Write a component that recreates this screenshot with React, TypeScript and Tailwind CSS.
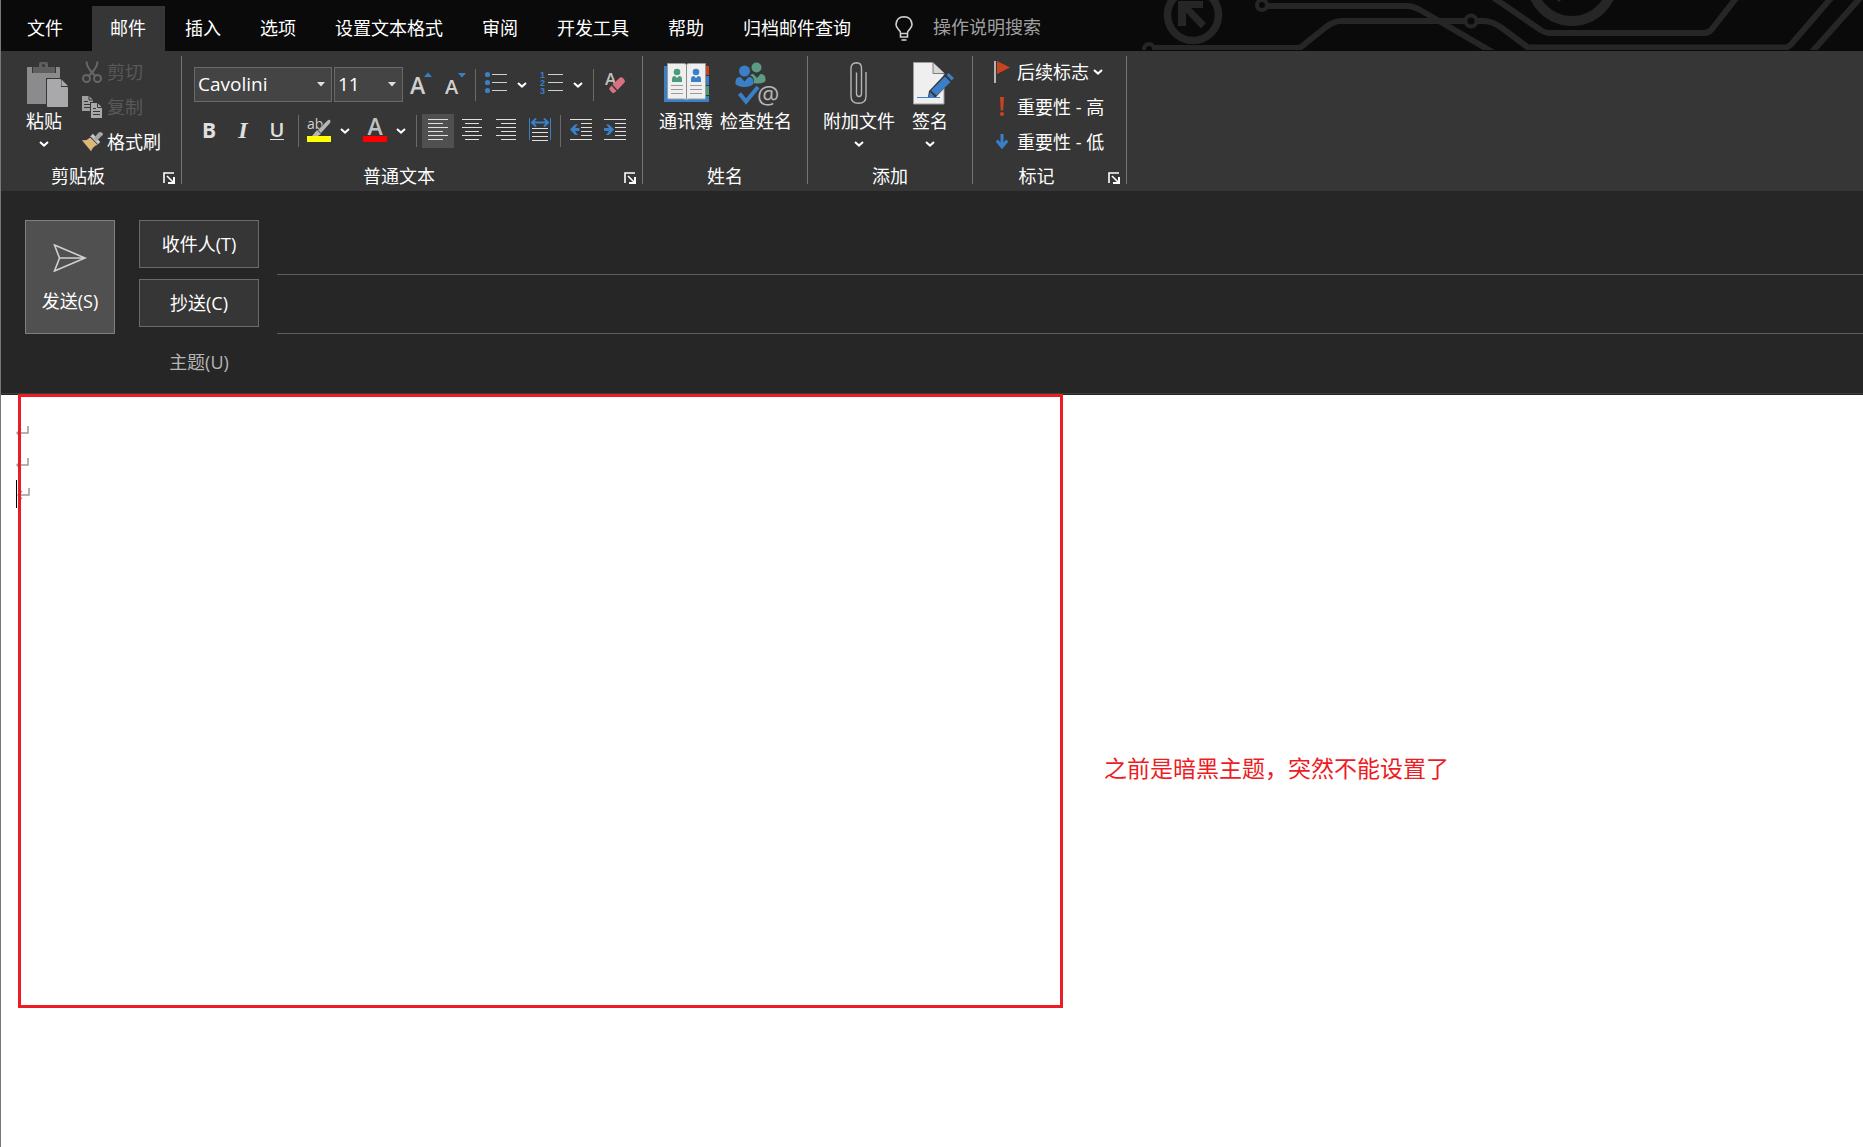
import React from "react";

type Kids = { children?: React.ReactNode };

const BLUE = "#3a80c9";
const RED = "#ca4420";

/* ---------- small shared pieces ---------- */

function Chevron() {
  return (
    <svg width="10" height="6" viewBox="0 0 10 6" fill="none" stroke="#fff" strokeWidth="2" aria-hidden="true">
      <path d="M1 1l4 3.6L9 1" />
    </svg>
  );
}

function Group({ label, launcher, className, children }: Kids & { label: string; launcher?: boolean; className?: string }) {
  return (
    <section aria-label={label} className="flex h-32 shrink-0 flex-col justify-between border-r border-[#757575]">
      <div className={className}>{children}</div>
      <div className="flex items-end">
        <div className="flex-1 pb-px text-center leading-[14px]">{label}</div>
        {launcher && (
          <button aria-label={label + "设置"} className="w-[26px] pl-2">
            <svg width="12" height="12" viewBox="0 0 12 12" fill="none" stroke="#fff" strokeWidth="2">
              <path d="M1 11V1h10" strokeWidth="1.6" />
              <path d="M4 4l6 6" strokeWidth="1.6" />
              <path d="M11 5v6H5" strokeWidth="2" />
            </svg>
          </button>
        )}
      </div>
    </section>
  );
}

function BigButton({ icon, label, menu, start }: { icon: React.ReactNode; label: string; menu?: boolean; start?: boolean }) {
  return (
    <button className={start ? "flex flex-col items-start" : "flex flex-col items-center"}>
      <span className="flex h-[46px] items-start">{icon}</span>
      <span className="flex flex-col items-center">
        <span className="leading-[26px]">{label}</span>
        {menu && (
          <span className="flex h-5 items-center">
            <Chevron />
          </span>
        )}
      </span>
    </button>
  );
}

function SmallButton({ icon, label, disabled, menu }: { icon: React.ReactNode; label: string; disabled?: boolean; menu?: boolean }) {
  return (
    <button disabled={disabled} className="flex h-[31px] items-center gap-1 disabled:text-[#595959]">
      <span className="flex w-[22px] justify-center">{icon}</span>
      <span>{label}</span>
      {menu && <Chevron />}
    </button>
  );
}

function Tool({ label, active, narrow, children }: Kids & { label: string; active?: boolean; narrow?: boolean }) {
  const width = narrow ? "w-8" : "w-[34px]";
  return (
    <button
      aria-label={label}
      className={`flex h-[34px] items-center justify-center pb-[3px] text-[#e0e0e0] ${width} ${active ? "bg-[#505050]" : ""}`}
    >
      {children}
    </button>
  );
}

function Drop({ label }: { label: string }) {
  return (
    <button aria-label={label} className="flex h-[34px] w-[18px] items-center justify-center">
      <Chevron />
    </button>
  );
}

function Sep({ wide }: { wide?: boolean }) {
  return (
    <span className={wide ? "flex w-3 justify-center" : "flex w-2 justify-center"}>
      <span className="h-8 w-px bg-[#6a6a6a]" />
    </span>
  );
}

function Picker({ label, value, className }: { label: string; value: string; className: string }) {
  return (
    <span className={`relative flex h-[35px] ${className}`}>
      <select
        aria-label={label}
        defaultValue={value}
        className="w-full appearance-none border border-[#6a6a6a] bg-[#444] pb-0.5 pl-[3px] text-[19px] text-white"
      >
        <option>{value}</option>
      </select>
      <svg className="pointer-events-none absolute top-[15px] right-[7px]" width="8" height="5" viewBox="0 0 8 5" aria-hidden="true">
        <path d="M0 0h8L4 4.6z" fill="#e0e0e0" />
      </svg>
    </span>
  );
}

/* ---------- icons ---------- */

function PasteIcon() {
  return (
    <svg width="42" height="46" viewBox="0 0 42 46">
      <path d="M1 5h33v37H1z" fill="#8b8b8d" />
      <path d="M6 5h29v6H6z" fill="#363636" />
      <path d="M30 5h3q1 0 1 1v6h-4z" fill="#8b8b8d" />
      <path d="M7 5h6V2q0-2 2-2h5q2 0 2 2v3h7v6H7z" fill="#5f5f5f" />
      <circle cx="17.500" cy="3.500" r="1.500" fill="#363636" />
      <path d="M20 16h15l8 8v22H20z" fill="#363636" />
      <path d="M21.500 17.500h13v8h7v19h-20z" fill="#a9a9ab" stroke="#a9a9ab" strokeWidth="1" />
      <path d="M35.500 17.500v6.500H42z" fill="#a9a9ab" />
    </svg>
  );
}

function CutIcon() {
  return (
    <svg width="20" height="22" viewBox="0 0 20 22" fill="none" stroke="#666" strokeWidth="2">
      <path d="M4.500 0.500q0 4 3 8l6 7M15.500 0.500q0 4-3 8l-6 7" />
      <circle cx="4.500" cy="17.500" r="3.500" />
      <circle cx="15.500" cy="17.500" r="3.500" />
    </svg>
  );
}

function CopyIcon() {
  return (
    <svg width="20" height="22" viewBox="0 0 20 22">
      <path d="M0 0h7l4 4v11H0z" fill="#a0a0a0" />
      <path d="M7 0v4h4" fill="none" stroke="#363636" />
      <path d="M2 5.500h4M2 8.500h6M2 11.500h6" stroke="#363636" />
      <path d="M8 6h8l4 4v12H8z" fill="#363636" />
      <path d="M9 7h6.500l4.500 4.500V22H9z" fill="#a9a9ab" />
      <path d="M15.500 7v4.500H20" fill="none" stroke="#363636" />
      <path d="M11 12.500h3M11 15.500h7M11 18.500h7" stroke="#363636" />
    </svg>
  );
}

function BrushIcon() {
  return (
    <svg width="24" height="22" viewBox="0 0 24 22">
      <path d="M1 9q5 1 9-3l8 8q-5 2-7 7z" fill="#deb77b" />
      <path d="M10 5l3-3 8 9-3 3z" fill="#c9c9c9" />
      <path d="M14 7l5-6q2-2 4 0t0 3l-6 6z" fill="#a6a6a6" />
      <path d="M10.500 5.500l8 8.500" stroke="#363636" />
    </svg>
  );
}

function GrowFont({ down }: { down?: boolean }) {
  return (
    <svg width="22" height="24" viewBox="0 0 22 24" className="overflow-visible">
      <text x={down ? 2 : 1} y="23" fontSize={down ? 20 : 23} fontWeight="600" fill="#d0d0d0" fontFamily="Open Sans, sans-serif">
        A
      </text>
      <path d={down ? "M15 2h8l-4 4.500z" : "M15 6h8l-4-4.500z"} fill={BLUE} />
    </svg>
  );
}

function ListIcon({ numbered }: { numbered?: boolean }) {
  return (
    <svg width="24" height="24" viewBox="0 0 24 24" className="overflow-visible">
      {[4, 12, 20].map((y, i) =>
        numbered ? (
          <text key={y} x="0" y={y + 3} fontSize="9" fontWeight="700" fill={BLUE} fontFamily="Liberation Sans, sans-serif">
            {i + 1}
          </text>
        ) : (
          <circle key={y} cx="3.500" cy={y - 0.5} r="2.600" fill={BLUE} />
        ),
      )}
      <path d="M8 3.500h15M8 11.500h15M8 19.500h15" stroke="#d0d0d0" />
    </svg>
  );
}

function EraserIcon() {
  return (
    <svg width="22" height="24" viewBox="0 0 22 24" className="overflow-visible">
      <text x="0" y="14" fontSize="17" fontWeight="600" fill="#c0c0c0" fontFamily="Open Sans, sans-serif">
        A
      </text>
      <path d="M4 17L16 6l5 6-12 12z" fill="#363636" />
      <path d="M7.500 13.500L15 6.600q1.500-1 3 .5l1.500 2q1 1.500 0 2.500L12.500 19z" fill="#da7183" />
      <path d="M6.500 14.500L4.500 17q-.6 1 .3 2l2.400 2.800q1 .8 2 0L11.500 20z" fill="#da7183" />
    </svg>
  );
}

function HighlightIcon() {
  return (
    <svg width="24" height="24" viewBox="0 0 24 24" className="overflow-visible">
      <text x="0" y="11" fontSize="14" fill="#d0d0d0" fontFamily="Open Sans, sans-serif">
        ab
      </text>
      <path d="M8 15L20 2l5 4-11 12z" fill="#363636" />
      <path d="M11 12l9-9q2-2 3-1t0 3l-9 10z" fill="#b5b5b5" />
      <path d="M10 12l4 4-3 2H5z" fill="#b5b5b5" />
      <path d="M0 18h24v6H0z" fill="#ff0" />
    </svg>
  );
}

function FontColorIcon() {
  return (
    <svg width="24" height="24" viewBox="0 0 24 24" className="overflow-visible">
      <text x="12" y="17" textAnchor="middle" fontSize="23" fontWeight="600" fill="#c0c0c0" fontFamily="Open Sans, sans-serif">
        A
      </text>
      <path d="M0 18h24v6H0z" fill="#f00" />
    </svg>
  );
}

function AlignIcon({ kind }: { kind: "left" | "center" | "right" }) {
  const inset = { left: 0, center: 3, right: 5 }[kind];
  const short = kind === "center" ? 14 : 15;
  return (
    <svg width="20" height="22" viewBox="0 0 20 22" stroke="#e0e0e0">
      {[0, 1, 2, 3, 4, 5].map((i) => {
        const y = i * 4 + 0.5;
        const odd = i % 2 === 1;
        return <path key={i} d={odd ? `M${inset} ${y}h${short}` : `M0 ${y}h20`} />;
      })}
    </svg>
  );
}

function DistributeIcon() {
  return (
    <svg width="22" height="23" viewBox="0 0 22 23" fill="none">
      <path d="M.5 0v22M21.500 0v22" stroke={BLUE} />
      <path d="M3 4.500h16M7 .5l-4 4 4 4M15 .5l4 4-4 4" stroke={BLUE} strokeWidth="2" />
      <path d="M3 10.500h16M3 14.500h16M3 18.500h16M3 22.500h16" stroke="#e0e0e0" />
    </svg>
  );
}

function IndentIcon({ out }: { out?: boolean }) {
  return (
    <svg width="22" height="21" viewBox="0 0 22 21" fill="none">
      <path d="M0 .5h22M11 4.500h11M11 8.500h11M11 12.500h11M11 16.500h11M0 20.500h22" stroke="#e0e0e0" />
      <path
        d={out ? "M0 10.500l5-5h3L5 9h4.500v3H5l3 4H5z" : "M10 10.500l-5-5H2L5 9H0v3h5l-3 4h3z"}
        fill={BLUE}
      />
    </svg>
  );
}

function BookIcon() {
  return (
    <svg width="46" height="42" viewBox="0 0 46 42">
      <path d="M1 4h40v36H1z" fill={BLUE} />
      <path d="M42 4h4v9h-4z" fill={RED} />
      <path d="M42 14h4v9h-4z" fill={BLUE} />
      <path d="M42 24h4v9h-4z" fill="#4c9a7c" />
      <path d="M41 34h5v6h-5z" fill={BLUE} />
      <path d="M4.500 1.500h16q3 0 3 1.500 0-1.500 3-1.500h16V37h-16q-3 0-3 1 0-1-3-1h-16z" fill="#efefef" stroke="#9b9b9b" />
      <path d="M23.500 3v34" stroke="#8a8a8a" />
      <circle cx="14" cy="10" r="3.300" fill="#4c9a7c" />
      <path d="M9 20v-3q0-3 3-3l2 2 2-2q3 0 3 3v3z" fill="#4c9a7c" />
      <circle cx="33" cy="10" r="3.300" fill={BLUE} />
      <path d="M28 20v-3q0-3 3-3l2 2 2-2q3 0 3 3v3z" fill={BLUE} />
      <path d="M8 23.500h12M8 27.500h12M8 31.500h12M27 23.500h12M27 27.500h12M27 31.500h12" stroke="#9b9b9b" />
    </svg>
  );
}

function CheckNamesIcon() {
  return (
    <svg width="50" height="46" viewBox="-4 0 50 46" className="overflow-visible">
      <circle cx="21.500" cy="5.500" r="5" fill="#5d9c84" />
      <path d="M14 21v-4q0-5 4.500-5l3.500 4 3.500-4q5 0 5 5v2q-2 2.500-8 2.500z" fill="#5d9c84" />
      <path d="M0 24v-6q2-5 5-5h9q5 1 5 6v6z" fill="#363636" />
      <circle cx="9.500" cy="9" r="5.500" fill={BLUE} />
      <path d="M.5 22v-2q0-5 5-5l4 4.500L13.500 15q5 0 5 5v2q-3 3-9 3t-9-3z" fill={BLUE} />
      <path d="M4.500 31.500l6.500 8L23 25" fill="none" stroke={BLUE} strokeWidth="4" />
      <text x="22" y="42" fontSize="25" fill="#b5b5b5" fontFamily="Open Sans, sans-serif">
        @
      </text>
    </svg>
  );
}

function ClipIcon() {
  return (
    <svg width="18" height="42" viewBox="0 0 18 42" fill="none" stroke="#b5b5b5" strokeWidth="1.400">
      <path d="M6.500 10.500v21q0 3 2.500 3t2.500-3V6q0-5-5-5.200Q1 1 1 6.500V34q0 7.300 7.500 7.300T16 34V10" />
    </svg>
  );
}

function SignIcon() {
  return (
    <svg width="42" height="44" viewBox="0 0 42 44">
      <path d="M1.500 .5h19L32 11v31H1.500z" fill="#efefef" stroke="#9b9b9b" />
      <path d="M21 .5V11.500h11" fill="#d8d8d8" stroke="#7b7b7b" />
      <path d="M22 0h10v10z" fill="#363636" />
      <path d="M17 29L35 10l7 6-18 19h-8z" fill="#363636" />
      <path d="M19 28.500l14-14 5.500 5.500-14 13.500z" fill={BLUE} />
      <path d="M34.500 13l2-2 5.500 5-2.500 2.500zM18 30l4.500 4.500-6 1.500z" fill={BLUE} />
      <path d="M5 35.500h23" stroke={BLUE} />
    </svg>
  );
}

function FlagIcon() {
  return (
    <svg width="16" height="22" viewBox="0 0 16 22">
      <path d="M0 0h2v22H0z" fill="#b5b5b5" />
      <path d="M3 0l13 6.500L3 13z" fill={RED} />
    </svg>
  );
}

function HighIcon() {
  return (
    <svg width="6" height="20" viewBox="0 0 6 20" fill={RED}>
      <path d="M1 0h4l-.8 13.500H1.800z" />
      <circle cx="3" cy="17" r="2" />
    </svg>
  );
}

function LowIcon() {
  return (
    <svg width="12" height="16" viewBox="0 0 12 16" fill="none" stroke={BLUE} strokeWidth="3">
      <path d="M6 0v13M.8 6.500L6 12.800l5.200-6.300" />
    </svg>
  );
}

function BulbIcon() {
  return (
    <svg width="18" height="25" viewBox="0 0 18 25" fill="none" stroke="#d0d0d0" strokeWidth="1.600">
      <path d="M5.500 17.500Q5.500 15 3 12.800 1 10.500 1 8.500 1.500 1 9 .8 16.500 1 17 8.500q0 2-2 4.300-2.500 2.200-2.500 4.700zM5.500 17.500v3.500h7v-3.500" />
      <path d="M6.500 24h5" />
    </svg>
  );
}

function SendIcon() {
  return (
    <svg width="34" height="28" viewBox="0 0 34 28" fill="none" stroke="#d0d0d0" strokeWidth="1.600">
      <path d="M1.500 1L32 14 1.500 27l5-13zM6.500 14H32" />
    </svg>
  );
}

function CircuitArt() {
  return (
    <svg width="733" height="50" viewBox="0 0 733 50" fill="none" stroke="#262626" strokeWidth="6" className="ml-auto shrink-0" aria-hidden="true">
      <circle cx="63" cy="15" r="25.500" strokeWidth="7.500" />
      <path d="M48 1h25v7H61l15 15-5 5.500-15-16V26h-8z" fill="#262626" stroke="none" />
      <circle cx="132" cy="5" r="5" strokeWidth="4" />
      <path d="M138 6h139q6 0 14 4.500L364 53" />
      <circle cx="19" cy="49" r="5" strokeWidth="4" />
      <path d="M25 48h142q4 0 9-5l20-16q8-6 15-6h124M347 21h7q8 0 18 7l26 19.500h257q3 0 6-3L702-3" />
      <circle cx="341" cy="21" r="5.500" strokeWidth="4" />
      <path d="M364-2l43 29.500q7 5.500 12 5.500h155q5 0 8-4l25-32" />
      <circle cx="442" cy="-20" r="41" strokeWidth="10" />
      <path d="M427 0h4l-2 2z" fill="#262626" stroke="none" />
      <path d="M731-3l-50 56" />
    </svg>
  );
}

function ParagraphMark() {
  return (
    <svg width="13" height="12" viewBox="0 0 13 12" fill="none" stroke="#9a9a9a" strokeWidth="1.500">
      <path d="M12 0v7H1M5 3L1 7l4 4" />
    </svg>
  );
}

/* ---------- page ---------- */

const tabs = ["邮件", "插入", "选项", "设置文本格式", "审阅", "开发工具", "帮助", "归档邮件查询"];

function TabBar() {
  return (
    <header className="flex h-[51px] items-start overflow-hidden bg-[#0a0a0a]">
      <nav className="flex shrink-0 gap-0.5 pt-1.5 pl-2">
        <button className="mr-2 h-[45px] pr-[19px] pb-0.5 pl-[18px]">文件</button>
        {tabs.map((t, i) => (
          <button key={t} className={`h-[45px] pr-[19px] pb-0.5 pl-[18px] ${i === 0 ? "bg-[#363636]" : ""}`}>
            {t}
          </button>
        ))}
      </nav>
      <label className="flex shrink-0 items-center gap-5 pt-[15px] pl-[25px]">
        <BulbIcon />
        <input aria-label="操作说明搜索" placeholder="操作说明搜索" className="w-[130px] bg-transparent pb-0.5 outline-none placeholder:text-[#a0a0a0]" />
      </label>
      <CircuitArt />
    </header>
  );
}

function Ribbon() {
  return (
    <div className="flex bg-[#363636] pt-[5px] pb-[7px]">
      <Group label="剪贴板" launcher className="flex gap-[13px] pr-5 pl-[25px]">
        <div className="pt-1.5">
          <BigButton icon={<PasteIcon />} label="粘贴" menu start />
        </div>
        <div className="flex flex-col gap-1">
          <SmallButton icon={<CutIcon />} label="剪切" disabled />
          <SmallButton icon={<CopyIcon />} label="复制" disabled />
          <SmallButton icon={<BrushIcon />} label="格式刷" />
        </div>
      </Group>

      <Group label="普通文本" launcher className="flex flex-col gap-3 pt-[11px] pr-[9px] pl-2.5">
        <div className="flex items-center pl-0.5">
          <Picker label="字体" value="Cavolini" className="mr-0.5 w-[138px]" />
          <Picker label="字号" value="11" className="w-[69px]" />
          <Tool label="增大字号"><GrowFont /></Tool>
          <Tool label="减小字号"><GrowFont down /></Tool>
          <Sep />
          <Tool label="项目符号"><ListIcon /></Tool>
          <Drop label="项目符号选项" />
          <span className="w-1" />
          <Tool label="编号"><ListIcon numbered /></Tool>
          <Drop label="编号选项" />
          <Sep wide />
          <Tool label="清除格式"><EraserIcon /></Tool>
        </div>
        <div className="flex items-center">
          <Tool label="加粗"><span className="text-[21px] font-bold">B</span></Tool>
          <Tool label="倾斜"><span className="font-['Liberation_Serif',serif] text-[24px] font-bold italic">I</span></Tool>
          <Tool label="下划线"><span className="border-b border-[#e0e0e0] text-[20px] leading-[19px] font-semibold">U</span></Tool>
          <Sep />
          <Tool label="突出显示"><HighlightIcon /></Tool>
          <Drop label="突出显示颜色" />
          <span className="w-1" />
          <Tool label="字体颜色"><FontColorIcon /></Tool>
          <Drop label="字体颜色选项" />
          <Sep wide />
          <div className="flex gap-0.5">
            <Tool label="左对齐" narrow active><AlignIcon kind="left" /></Tool>
            <Tool label="居中" narrow><AlignIcon kind="center" /></Tool>
            <Tool label="右对齐" narrow><AlignIcon kind="right" /></Tool>
            <Tool label="分散对齐" narrow><DistributeIcon /></Tool>
          </div>
          <Sep />
          <Tool label="减少缩进"><IndentIcon out /></Tool>
          <Tool label="增加缩进"><IndentIcon /></Tool>
        </div>
      </Group>

      <Group label="姓名" className="flex gap-[7px] pt-1.5 pr-[15px] pl-4">
        <BigButton icon={<BookIcon />} label="通讯簿" />
        <BigButton icon={<CheckNamesIcon />} label="检查姓名" />
      </Group>

      <Group label="添加" className="flex gap-[17px] pt-1.5 pr-[18px] pl-[15px]">
        <BigButton icon={<ClipIcon />} label="附加文件" menu />
        <BigButton icon={<SignIcon />} label="签名" menu start />
      </Group>

      <Group label="标记" launcher className="flex flex-col items-start gap-1 pr-[22px] pl-[18px]">
        <SmallButton icon={<FlagIcon />} label="后续标志" menu />
        <SmallButton icon={<HighIcon />} label="重要性 - 高" />
        <SmallButton icon={<LowIcon />} label="重要性 - 低" />
      </Group>
    </div>
  );
}

function ComposeHeader() {
  const fields = [
    { id: "to", label: "收件人(T)" },
    { id: "cc", label: "抄送(C)" },
  ];
  return (
    <div className="flex items-start border-b border-[#3c3c3c] bg-[#262626] pt-[29px] pl-6">
      <button className="flex h-[114px] w-[90px] shrink-0 flex-col items-center gap-[17px] border border-[#7f7f7f] bg-[#505050] pt-[23px]">
        <SendIcon />
        <span>发送(S)</span>
      </button>
      <div className="flex flex-1 flex-col gap-1 pl-6">
        {fields.map((f) => (
          <div key={f.id} className="flex items-start gap-[18px]">
            <button className="h-12 w-[120px] shrink-0 border border-[#6a6a6a] bg-[#363636]">{f.label}</button>
            <input id={f.id} aria-label={f.label} className="h-[55px] min-w-0 flex-1 border-b border-[#5f5f5f] bg-transparent outline-none" />
          </div>
        ))}
        <div className="flex items-start gap-[18px]">
          <label htmlFor="subject" className="w-[120px] shrink-0 text-center leading-[48px] text-[#b5b5b5]">
            主题(U)
          </label>
          <input id="subject" className="h-[55px] min-w-0 flex-1 bg-transparent outline-none" />
        </div>
      </div>
    </div>
  );
}

function Editor() {
  return (
    <main className="relative flex-1 border-t border-[#262626] bg-white">
      <div role="textbox" aria-label="邮件正文" className="flex flex-col pt-[21px] pl-[15px]">
        <p className="flex h-8 items-center"><ParagraphMark /></p>
        <p className="flex h-8 items-center"><ParagraphMark /></p>
        <p className="flex h-7 items-center border-l border-black"><ParagraphMark /></p>
      </div>
      <div className="absolute -top-px left-[17px] h-[614px] w-[1045px] border-[3px] border-[#ed1c24]" />
      <p className="absolute top-[357px] left-[1103px] text-[23px] leading-8 text-[#ed1c24]">之前是暗黑主题，突然不能设置了</p>
    </main>
  );
}

export default function App() {
  return (
    <div
      lang="zh-CN"
      className="flex min-h-screen flex-col border-l border-[#777] bg-white font-['Open_Sans','Noto_Sans_CJK_SC',sans-serif] text-[18px] leading-6 text-white"
    >
      <TabBar />
      <Ribbon />
      <ComposeHeader />
      <Editor />
    </div>
  );
}
